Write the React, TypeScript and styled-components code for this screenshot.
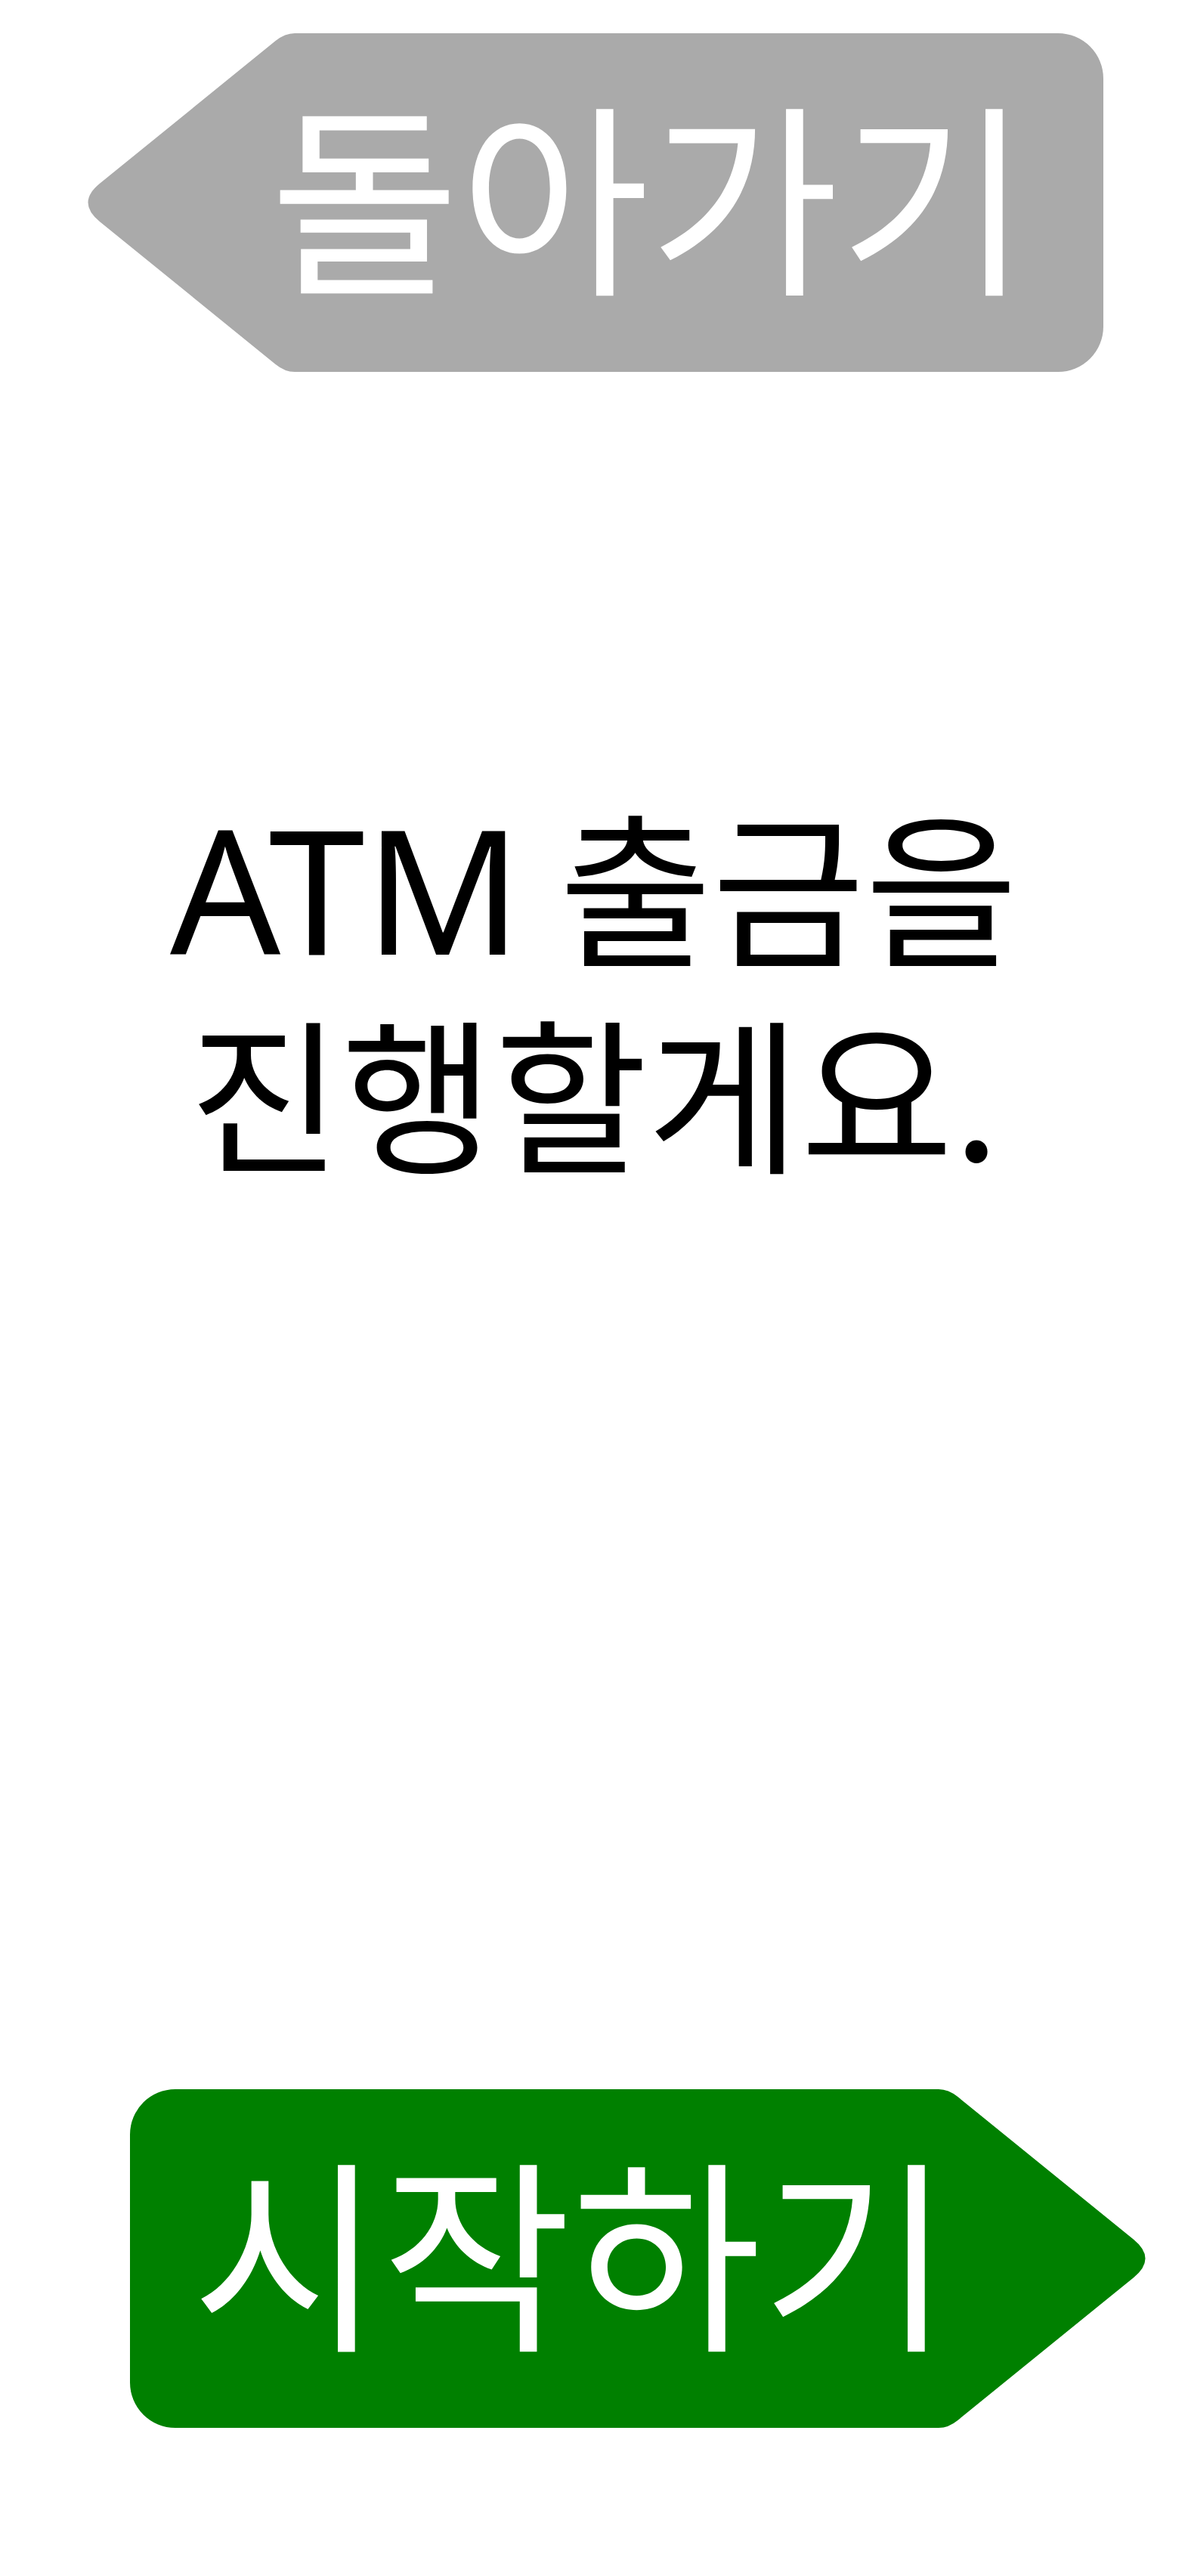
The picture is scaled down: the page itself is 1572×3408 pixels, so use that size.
import React from "react";
import styled, { createGlobalStyle, css } from "styled-components";

const GlobalStyle = createGlobalStyle`
  html, body {
    margin: 0;
    padding: 0;
    background: #ffffff;
  }
  body {
    font-family: "Noto Sans CJK KR", "Noto Sans", sans-serif;
  }
`;

const W = 1344;
const H = 448;

const leftArrowPath = `M 274 0 H 1284 A 60 60 0 0 1 1344 60 V 388 A 60 60 0 0 1 1284 448 H 274 Q 261 448 248.6 437.9 L 16 249.2 Q -15 224 16 198.8 L 248.6 10.1 Q 261 0 274 0 Z`;
const rightArrowPath = `M 1070 0 H 60 A 60 60 0 0 0 0 60 V 388 A 60 60 0 0 0 60 448 H 1070 Q 1083 448 1095.4 437.9 L 1328 249.2 Q 1359 224 1328 198.8 L 1095.4 10.1 Q 1083 0 1070 0 Z`;

const Page = styled.main`
  width: 1572px;
  min-height: 3408px;
  box-sizing: border-box;
  padding: 44px 0 196px 0;
  display: flex;
  flex-direction: column;
`;

const ArrowButton = styled.button<{ $dir: "left" | "right"; $bg: string; $padLeft: number }>`
  width: ${W}px;
  height: ${H}px;
  flex: none;
  box-sizing: border-box;
  border: none;
  padding: 0 0 34px ${(p) => p.$padLeft}px;
  background: ${(p) => p.$bg};
  color: #ffffff;
  display: flex;
  align-items: center;
  justify-content: flex-start;
  font-family: "Noto Sans CJK KR", "Noto Sans", sans-serif;
  font-size: 273px;
  font-weight: 400;
  letter-spacing: 0;
  line-height: 1;
  white-space: nowrap;
  cursor: pointer;
  ${(p) =>
    p.$dir === "left"
      ? css`
          clip-path: path("${leftArrowPath}");
          margin: 0 0 0 116px;
        `
      : css`
          clip-path: path("${rightArrowPath}");
          margin: auto 0 0 172px;
        `}
`;

const Message = styled.h1`
  margin: 539px 0 0 0;
  width: 100%;
  text-align: center;
  color: #000000;
  font-family: "Noto Sans CJK KR", "Noto Sans", sans-serif;
  font-size: 220px;
  font-weight: 400;
  letter-spacing: 0;
  line-height: 273px;
`;

const Latin = styled.span`
  font-family: "Noto Sans", "Noto Sans CJK KR", sans-serif;
  font-size: 229px;
  line-height: 1;
`;

export default function App() {
  return (
    <>
      <GlobalStyle />
      <Page>
        <ArrowButton $dir="left" $bg="#aaaaaa" $padLeft={241}>
          돌아가기
        </ArrowButton>
        <Message>
          <Latin>ATM</Latin> 출금을
          <br />
          진행할게요.
        </Message>
        <ArrowButton $dir="right" $bg="#008000" $padLeft={82}>
          시작하기
        </ArrowButton>
      </Page>
    </>
  );
}
